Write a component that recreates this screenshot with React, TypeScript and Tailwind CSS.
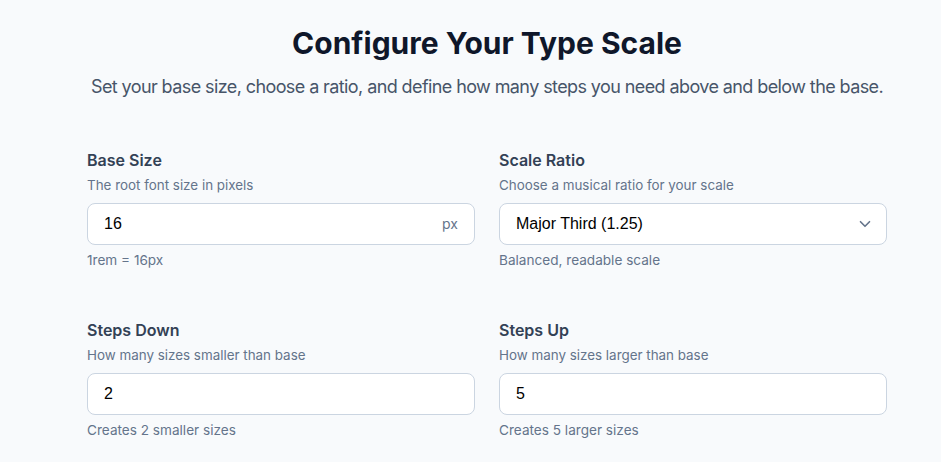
import React from 'react'

const inter = "[font-family:Inter,'Noto_Sans',sans-serif]"

interface FieldProps {
  label: string
  help: string
  hint: string
  children: React.ReactNode
}

const Field = ({ label, help, hint, children }: FieldProps) => (
  <div className="flex flex-col">
    <label className="text-base font-semibold leading-6 text-[#334155]">{label}</label>
    <p className="mt-[3px] text-[13.4px] leading-5 text-[#64748b]">{help}</p>
    <div className="mt-2">{children}</div>
    <p className="mt-[5px] text-[13.6px] leading-5 text-[#64748b]">{hint}</p>
  </div>
)

const boxClass =
  "flex h-[42px] w-full items-center rounded-lg border border-[#cbd5e1] bg-white px-4 text-base text-black [font-family:'Liberation_Sans',Arial,sans-serif]"

export default function App() {
  return (
    <div className={`min-h-screen bg-[#f8fafc] ${inter}`}>
      <div className="ml-[87px] w-[800px] pt-[25px]">
        <h1 className="text-center text-3xl font-bold leading-9 text-[#0f172a]">
          Configure Your Type Scale
        </h1>
        <p className="mt-3 whitespace-nowrap text-center text-lg leading-7 tracking-[-0.033em] text-[#475569]">
          Set your base size, choose a ratio, and define how many steps you need above and below the base.
        </p>

        <div className="mt-[47px] grid grid-cols-2 gap-x-6 gap-y-12">
          <Field label="Base Size" help="The root font size in pixels" hint="1rem = 16px">
            <div className={boxClass}>
              <span className="flex-1">16</span>
              <span className={`text-sm text-[#64748b] ${inter}`}>px</span>
            </div>
          </Field>

          <Field label="Scale Ratio" help="Choose a musical ratio for your scale" hint="Balanced, readable scale">
            <div className={`${boxClass} pr-3`}>
              <span className="flex-1">Major Third (1.25)</span>
              <svg width="18" height="18" viewBox="0 0 24 24" fill="none" stroke="#64748b" strokeWidth="2.2" strokeLinecap="round" strokeLinejoin="round">
                <path d="M6 9l6 6 6-6" />
              </svg>
            </div>
          </Field>

          <Field label="Steps Down" help="How many sizes smaller than base" hint="Creates 2 smaller sizes">
            <div className={boxClass}>2</div>
          </Field>

          <Field label="Steps Up" help="How many sizes larger than base" hint="Creates 5 larger sizes">
            <div className={boxClass}>5</div>
          </Field>
        </div>
      </div>
    </div>
  )
}
